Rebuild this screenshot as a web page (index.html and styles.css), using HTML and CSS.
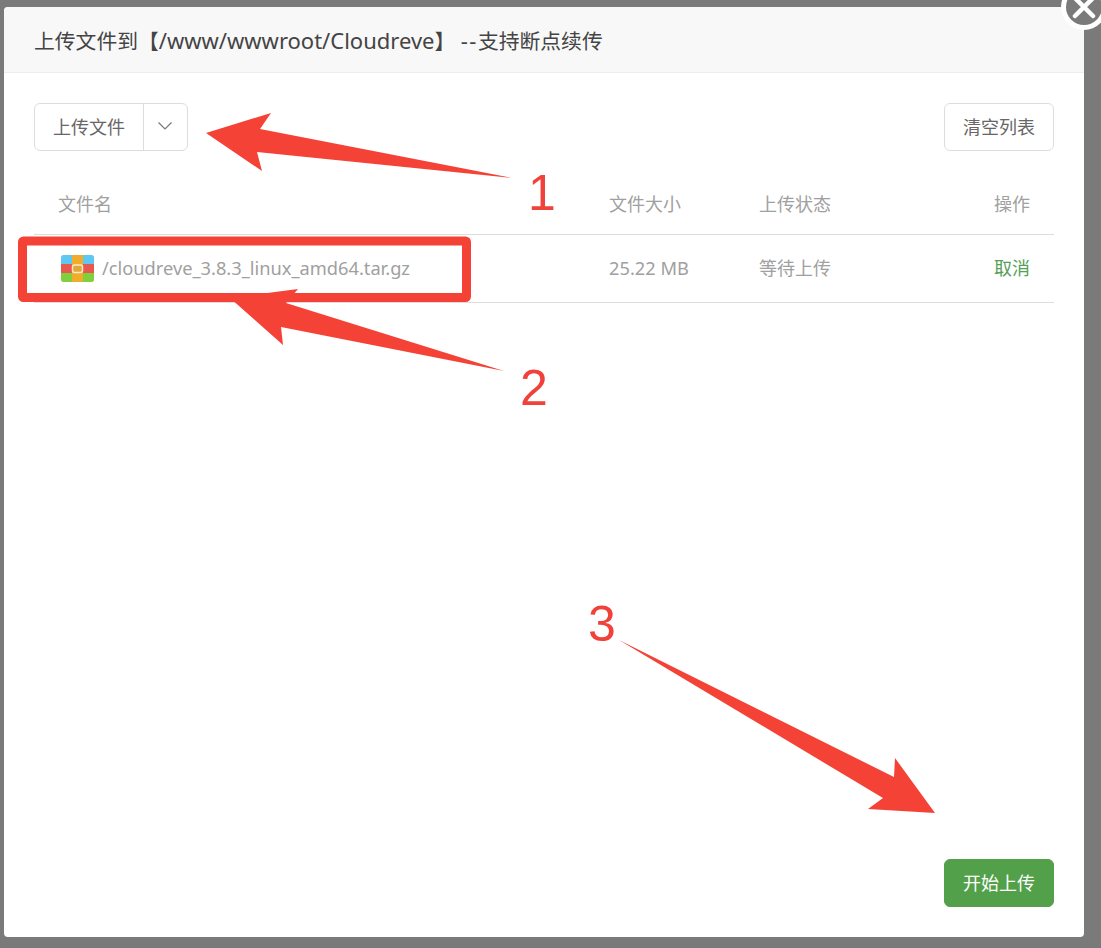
FILE: index.html
```html
<!DOCTYPE html>
<html lang="zh-CN">
<head>
<meta charset="utf-8">
<title>上传文件</title>
<link rel="stylesheet" href="styles.css">
</head>
<body>
<div class="dialog">
  <header class="dialog-head">上传文件到【<span class="latin">/www/wwwroot/Cloudreve</span>】 <span class="latin dashes">--</span>支持断点续传</header>
  <div class="dialog-body">
    <div class="toolbar">
      <div class="split-btn">
        <span class="split-main">上传文件</span>
        <span class="split-caret">
          <svg width="16" height="10" viewBox="0 0 16 10"><path d="M1.5 1.5 8 8l6.500-6.500" fill="none" stroke="#777" stroke-width="1.200"/></svg>
        </span>
      </div>
      <button class="btn">清空列表</button>
    </div>
    <div class="row row-head">
      <span class="col-name">文件名</span>
      <span class="col-size">文件大小</span>
      <span class="col-status">上传状态</span>
      <span class="col-action">操作</span>
    </div>
    <div class="row row-file">
      <span class="col-name file-name">
        <svg class="zip-icon" width="33" height="27" viewBox="0 0 33 27">
          <defs><clipPath id="zr"><rect width="33" height="27" rx="2.500"/></clipPath></defs>
          <g clip-path="url(#zr)">
            <rect width="33" height="9" fill="#5ec8f2"/>
            <rect y="9" width="33" height="9" fill="#e8584f"/>
            <rect y="18" width="33" height="9" fill="#7fd03c"/>
            <rect x="11" width="11" height="27" fill="#f0ad2c"/>
          </g>
          <rect x="11.500" y="10" width="10" height="7.500" rx="2" fill="#e0a838" stroke="#fde9c8" stroke-width="1.500"/>
        </svg>
        <span class="file-label">/cloudreve_3.8.3_linux_amd64.tar.gz</span>
      </span>
      <span class="col-size size-value">25.22 MB</span>
      <span class="col-status">等待上传</span>
      <span class="col-action link">取消</span>
    </div>
    <div class="dialog-foot"><button class="btn btn-primary">开始上传</button></div>
  </div>
</div>
<button class="close-btn" aria-label="关闭">
  <svg width="36" height="36" viewBox="0 0 36 36"><path d="M9 9 27 27M27 9 9 27" stroke="#fff" stroke-width="4.500" stroke-linecap="round"/></svg>
</button>
<svg class="annotations" width="1101" height="948" viewBox="0 0 1101 948">
  <g fill="#f44336">
    <polygon points="206,133 271,113 260,129 512,178 257,152 262,171"/>
    <polygon points="504,371 286,303 298,289 230,298 283,345 281,327"/>
    <polygon points="619,640 894,777 895,758 935,813 868,809 883,798"/>
  </g>
  <rect x="22.500" y="241" width="444" height="56.500" rx="1" fill="none" stroke="#f44336" stroke-width="9"/>
  <text class="mark" x="542" y="210">1</text>
  <text class="mark" x="534" y="405">2</text>
  <text class="mark" x="602" y="641">3</text>
</svg>
</body>
</html>
```
FILE: styles.css
```css
html, body {
  margin: 0;
  height: 948px;
  overflow: hidden;
}
body {
  position: relative;
  background: #7a7a7a;
  font-family: "Noto Sans", "Noto Sans CJK SC", sans-serif;
  color: #666;
}
.dialog {
  margin: 7px 0 0 4px;
  width: 1080px;
  height: 930px;
  background: #fff;
  border-radius: 4px;
  display: flex;
  flex-direction: column;
  overflow: hidden;
}
.dialog-head {
  height: 65px;
  line-height: 66px;
  padding-left: 30px;
  background: #f8f8f8;
  border-bottom: 1px solid #eee;
  font-size: 20.800px;
  color: #444;
  white-space: nowrap;
  flex: none;
}
.latin { font-size: 22px; }
.dashes { letter-spacing: 1.500px; }
.dialog-body {
  flex: 1;
  display: flex;
  flex-direction: column;
  padding: 30px;
}
.toolbar {
  display: flex;
  justify-content: space-between;
  align-items: stretch;
  height: 48px;
  margin-bottom: 6px;
}
.split-btn {
  display: flex;
  width: 154px;
  box-sizing: border-box;
  border: 1px solid #ddd;
  border-radius: 6px;
  font-size: 18px;
}
.split-main {
  width: 109px;
  padding-bottom: 2px;
  box-sizing: border-box;
  border-right: 1px solid #ddd;
  display: flex;
  align-items: center;
  justify-content: center;
}
.split-caret {
  flex: 1;
  padding: 0 1px 2px 0;
  display: flex;
  align-items: center;
  justify-content: center;
}
.btn {
  width: 110px;
  height: 48px;
  box-sizing: border-box;
  border: 1px solid #ddd;
  border-radius: 6px;
  background: #fff;
  color: #666;
  font-family: inherit;
  font-size: 18px;
  padding: 0 0 2px;
}
.btn-primary {
  background: #52a049;
  border-color: #52a049;
  color: #fff;
}
.row {
  display: flex;
  align-items: center;
  box-sizing: border-box;
  font-size: 18px;
  color: #a0a0a0;
  border-bottom: 1px solid #ddd;
}
.row-head {
  height: 78px;
  padding-top: 14px;
}
.row-file {
  height: 68px;
  padding-bottom: 3px;
}
.col-name {
  width: 575px;
  padding-left: 24px;
  box-sizing: border-box;
  white-space: nowrap;
}
.file-name {
  display: flex;
  align-items: center;
  gap: 8px;
  padding-left: 27px;
}
.file-label { font-size: 18.250px; }
.size-value { font-size: 18.250px; }
.zip-icon {
  flex: none;
  margin-top: 3px;
}
.col-size { width: 150px; }
.col-status { flex: 1; }
.col-action {
  width: 60px;
  padding-right: 24px;
  text-align: right;
}
.link { color: #55a058; }
.dialog-foot {
  margin-top: auto;
  display: flex;
  justify-content: flex-end;
}
.close-btn {
  position: absolute;
  left: 1066px;
  top: -11px;
  width: 36px;
  height: 36px;
  padding: 0;
  border: 0;
  border-radius: 50%;
  background: #7a7a7a;
  box-shadow: 0 0 0 5px #fff;
}
.close-btn svg { display: block; }
.annotations {
  position: absolute;
  left: 0;
  top: 0;
  pointer-events: none;
}
.mark {
  font-family: "Liberation Sans", sans-serif;
  font-size: 50px;
  fill: #f0413a;
  text-anchor: middle;
}
```
